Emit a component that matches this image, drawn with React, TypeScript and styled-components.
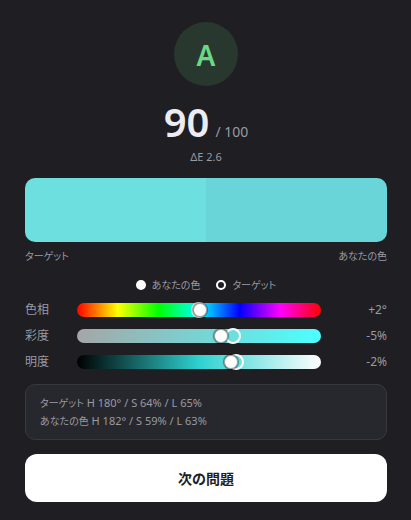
import React from "react";
import styled, { createGlobalStyle } from "styled-components";

const GlobalStyle = createGlobalStyle`
  *, *::before, *::after { box-sizing: border-box; }
  body {
    margin: 0;
    background: #1e1e23;
    color: #9a9aa2;
    font-family: "Noto Sans", "Noto Sans CJK JP", sans-serif;
    font-feature-settings: "palt";
  }
`;

const Page = styled.main`
  display: flex;
  flex-direction: column;
  padding: 22px 24px 18px 25px;
`;

const Grade = styled.div`
  align-self: center;
  display: grid;
  place-items: center;
  width: 64px;
  height: 64px;
  padding-top: 2px;
  border-radius: 50%;
  background: #28382f;
  color: #6bd983;
  font-size: 28px;
  font-weight: 600;
  line-height: 32px;
`;

const Score = styled.div`
  display: flex;
  justify-content: center;
  align-items: baseline;
  gap: 6px;
  margin-top: 16px;
  line-height: 40px;
`;

const Points = styled.strong`
  color: #ececf4;
  font-size: 40px;
  font-weight: 600;
`;

const OutOf = styled.span`
  font-size: 14px;
  line-height: 16px;
`;

const Delta = styled.div`
  margin-top: 6px;
  text-align: center;
  font-size: 11px;
  line-height: 18px;
`;

const Swatches = styled.div`
  display: flex;
  height: 64px;
  margin-top: 12px;
  border-radius: 10px;
  overflow: hidden;
`;

const Swatch = styled.div<{ $color: string }>`
  flex: 1;
  background: ${(p) => p.$color};
`;

const SwatchLabels = styled.div`
  display: flex;
  justify-content: space-between;
  margin-top: 6px;
  font-size: 10px;
  line-height: 16px;
`;

const Legend = styled.div`
  display: flex;
  justify-content: center;
  gap: 16px;
  margin-top: 13px;
  font-size: 10px;
  line-height: 16px;
`;

const LegendItem = styled.span`
  display: flex;
  align-items: center;
  gap: 6px;
`;

const Dot = styled.span<{ $hollow?: boolean }>`
  width: 10px;
  height: 10px;
  border: 2px solid #fff;
  border-radius: 50%;
  background: ${(p) => (p.$hollow ? "transparent" : "#fff")};
`;

const Channels = styled.div`
  display: grid;
  gap: 8px;
  margin-top: 8px;
`;

const Channel = styled.div`
  display: grid;
  grid-template-columns: 40px 1fr 54px;
  column-gap: 12px;
  align-items: center;
  font-size: 12px;
  line-height: 18px;
`;

const Difference = styled.output`
  text-align: right;
`;

const Track = styled.div<{ $fill: string }>`
  position: relative;
  height: 14px;
  border-radius: 7px;
  background: ${(p) => p.$fill};
`;

const TargetRing = styled.span`
  position: absolute;
  top: 50%;
  width: 16px;
  height: 16px;
  border: 2px solid #fff;
  border-radius: 50%;
  transform: translate(-50%, -50%);
`;

/* The input overhangs the track by half a thumb so 0 and max sit on its ends. */
const Slider = styled.input`
  appearance: none;
  position: absolute;
  inset: 0 -7px;
  height: 14px;
  margin: 0;
  background: transparent;
  pointer-events: none;

  &::-webkit-slider-thumb {
    appearance: none;
    width: 14px;
    height: 14px;
    border: 1px solid #a0a0a0;
    border-radius: 50%;
    background: #fff;
    box-shadow: 0 0 1px 1px rgba(0, 0, 0, 0.4);
  }
`;

const Details = styled.div`
  margin-top: 13px;
  padding: 9px 14px;
  border: 1px solid #38383d;
  border-radius: 10px;
  background: #27282d;
  font-size: 11px;
  line-height: 18px;
`;

const DetailName = styled.span`
  font-size: 10px;
`;

const NextButton = styled.button`
  height: 48px;
  margin-top: 14px;
  border: 0;
  border-radius: 12px;
  background: #fff;
  color: #1e1e23;
  font: inherit;
  font-size: 14px;
  font-weight: 600;
  cursor: pointer;
`;

const channels = [
  {
    id: "hue",
    label: "色相",
    max: 360,
    guess: 182,
    target: 180,
    diff: "+2°",
    fill: "linear-gradient(to right, #f00, #ff0, #0f0, #0ff, #00f, #f0f, #f00)",
  },
  {
    id: "saturation",
    label: "彩度",
    max: 100,
    guess: 59,
    target: 64,
    diff: "-5%",
    fill: "linear-gradient(to right, hsl(180 0% 65%), hsl(180 100% 65%))",
  },
  {
    id: "lightness",
    label: "明度",
    max: 100,
    guess: 63,
    target: 65,
    diff: "-2%",
    fill: "linear-gradient(to right, #000, hsl(180 64% 50%), #fff)",
  },
];

export default function App() {
  return (
    <>
      <GlobalStyle />
      <Page lang="ja">
        <Grade>A</Grade>
        <Score>
          <Points>90</Points>
          <OutOf>/ 100</OutOf>
        </Score>
        <Delta>ΔE 2.6</Delta>
        <Swatches>
          <Swatch $color="hsl(180 64% 65%)" />
          <Swatch $color="hsl(182 59% 63%)" />
        </Swatches>
        <SwatchLabels>
          <span>ターゲット</span>
          <span>あなたの色</span>
        </SwatchLabels>
        <Legend>
          <LegendItem>
            <Dot />
            あなたの色
          </LegendItem>
          <LegendItem>
            <Dot $hollow />
            ターゲット
          </LegendItem>
        </Legend>
        <Channels>
          {channels.map((c) => (
            <Channel key={c.id}>
              <label htmlFor={c.id}>{c.label}</label>
              <Track $fill={c.fill}>
                <TargetRing style={{ left: `${(c.target / c.max) * 100}%` }} />
                <Slider id={c.id} type="range" min={0} max={c.max} value={c.guess} readOnly />
              </Track>
              <Difference htmlFor={c.id}>{c.diff}</Difference>
            </Channel>
          ))}
        </Channels>
        <Details>
          <div>
            <DetailName>ターゲット</DetailName> H 180° / S 64% / L 65%
          </div>
          <div>
            <DetailName>あなたの色</DetailName> H 182° / S 59% / L 63%
          </div>
        </Details>
        <NextButton type="button">次の問題</NextButton>
      </Page>
    </>
  );
}
